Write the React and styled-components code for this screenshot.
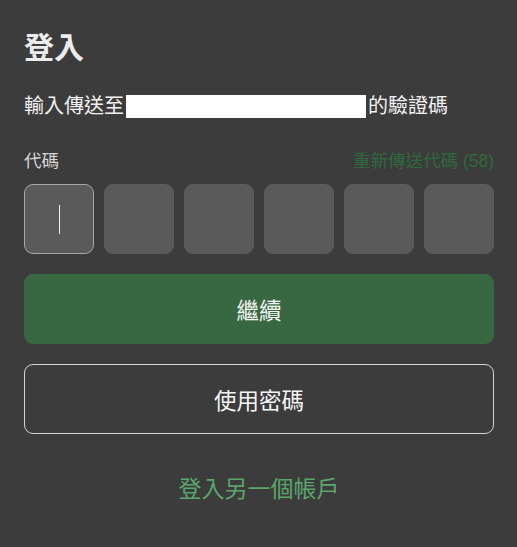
import React from "react";
import styled, { createGlobalStyle } from "styled-components";

const GlobalStyle = createGlobalStyle`
  html, body {
    margin: 0;
    padding: 0;
    background: #3c3c3c;
  }
  body {
    font-family: "Liberation Sans", "Noto Sans CJK TC", sans-serif;
  }
`;

const Page = styled.main`
  box-sizing: border-box;
  width: 517px;
  min-height: 547px;
  padding: 29px 23px 0 24px;
  background: #3c3c3c;
  color: #f2f2f2;
`;

const Title = styled.h1`
  margin: 0;
  font-size: 30px;
  line-height: 38px;
  font-weight: bold;
  color: #ececec;
`;

const Prompt = styled.p`
  margin: 25px 0 0;
  font-size: 20px;
  line-height: 28px;
  display: flex;
  align-items: center;
`;

const Redacted = styled.span`
  display: inline-block;
  width: 240px;
  height: 23px;
  margin: 0 2px;
  background: #ffffff;
`;

const LabelRow = styled.div`
  margin-top: 29px;
  display: flex;
  justify-content: space-between;
  align-items: center;
  font-size: 17.5px;
  line-height: 24px;
`;

const Label = styled.span`
  color: #d6d6d6;
`;

const Resend = styled.span`
  color: #2f6a3e;
`;

const CodeRow = styled.div`
  margin-top: 11px;
  display: grid;
  grid-template-columns: repeat(6, 70px);
  gap: 10px;
`;

const CodeBox = styled.div`
  box-sizing: border-box;
  height: 70px;
  border-radius: 9px;
  background: #5a5a5a;
  border: 1px solid ${(p) => (p.$active ? "#a8a8a8" : "#5a5a5a")};
  display: flex;
  align-items: center;
  justify-content: center;
`;

const Caret = styled.span`
  width: 1px;
  height: 29px;
  background: #f0f0f0;
`;

const Button = styled.button`
  box-sizing: border-box;
  display: block;
  width: 470px;
  height: 70px;
  margin-top: 20px;
  border-radius: 9px;
  font-family: inherit;
  font-size: 22.5px;
  color: #f4f4f4;
  cursor: pointer;
  background: ${(p) => (p.$primary ? "#386841" : "transparent")};
  border: 1px solid ${(p) => (p.$primary ? "#386841" : "#d4d4d4")};
`;

const SwitchLink = styled.a`
  display: block;
  width: 470px;
  margin-top: 40px;
  text-align: center;
  font-size: 23px;
  line-height: 30px;
  color: #5aa66b;
  cursor: pointer;
`;

const App = () => {
  const slots = [0, 1, 2, 3, 4, 5];
  return (
    <>
      <GlobalStyle />
      <Page>
        <Title>登入</Title>
        <Prompt>
          輸入傳送至
          <Redacted />
          的驗證碼
        </Prompt>
        <LabelRow>
          <Label>代碼</Label>
          <Resend>重新傳送代碼 (58)</Resend>
        </LabelRow>
        <CodeRow>
          {slots.map((i) => (
            <CodeBox key={i} $active={i === 0}>
              {i === 0 && <Caret />}
            </CodeBox>
          ))}
        </CodeRow>
        <Button $primary>繼續</Button>
        <Button>使用密碼</Button>
        <SwitchLink>登入另一個帳戶</SwitchLink>
      </Page>
    </>
  );
};

export default App;
